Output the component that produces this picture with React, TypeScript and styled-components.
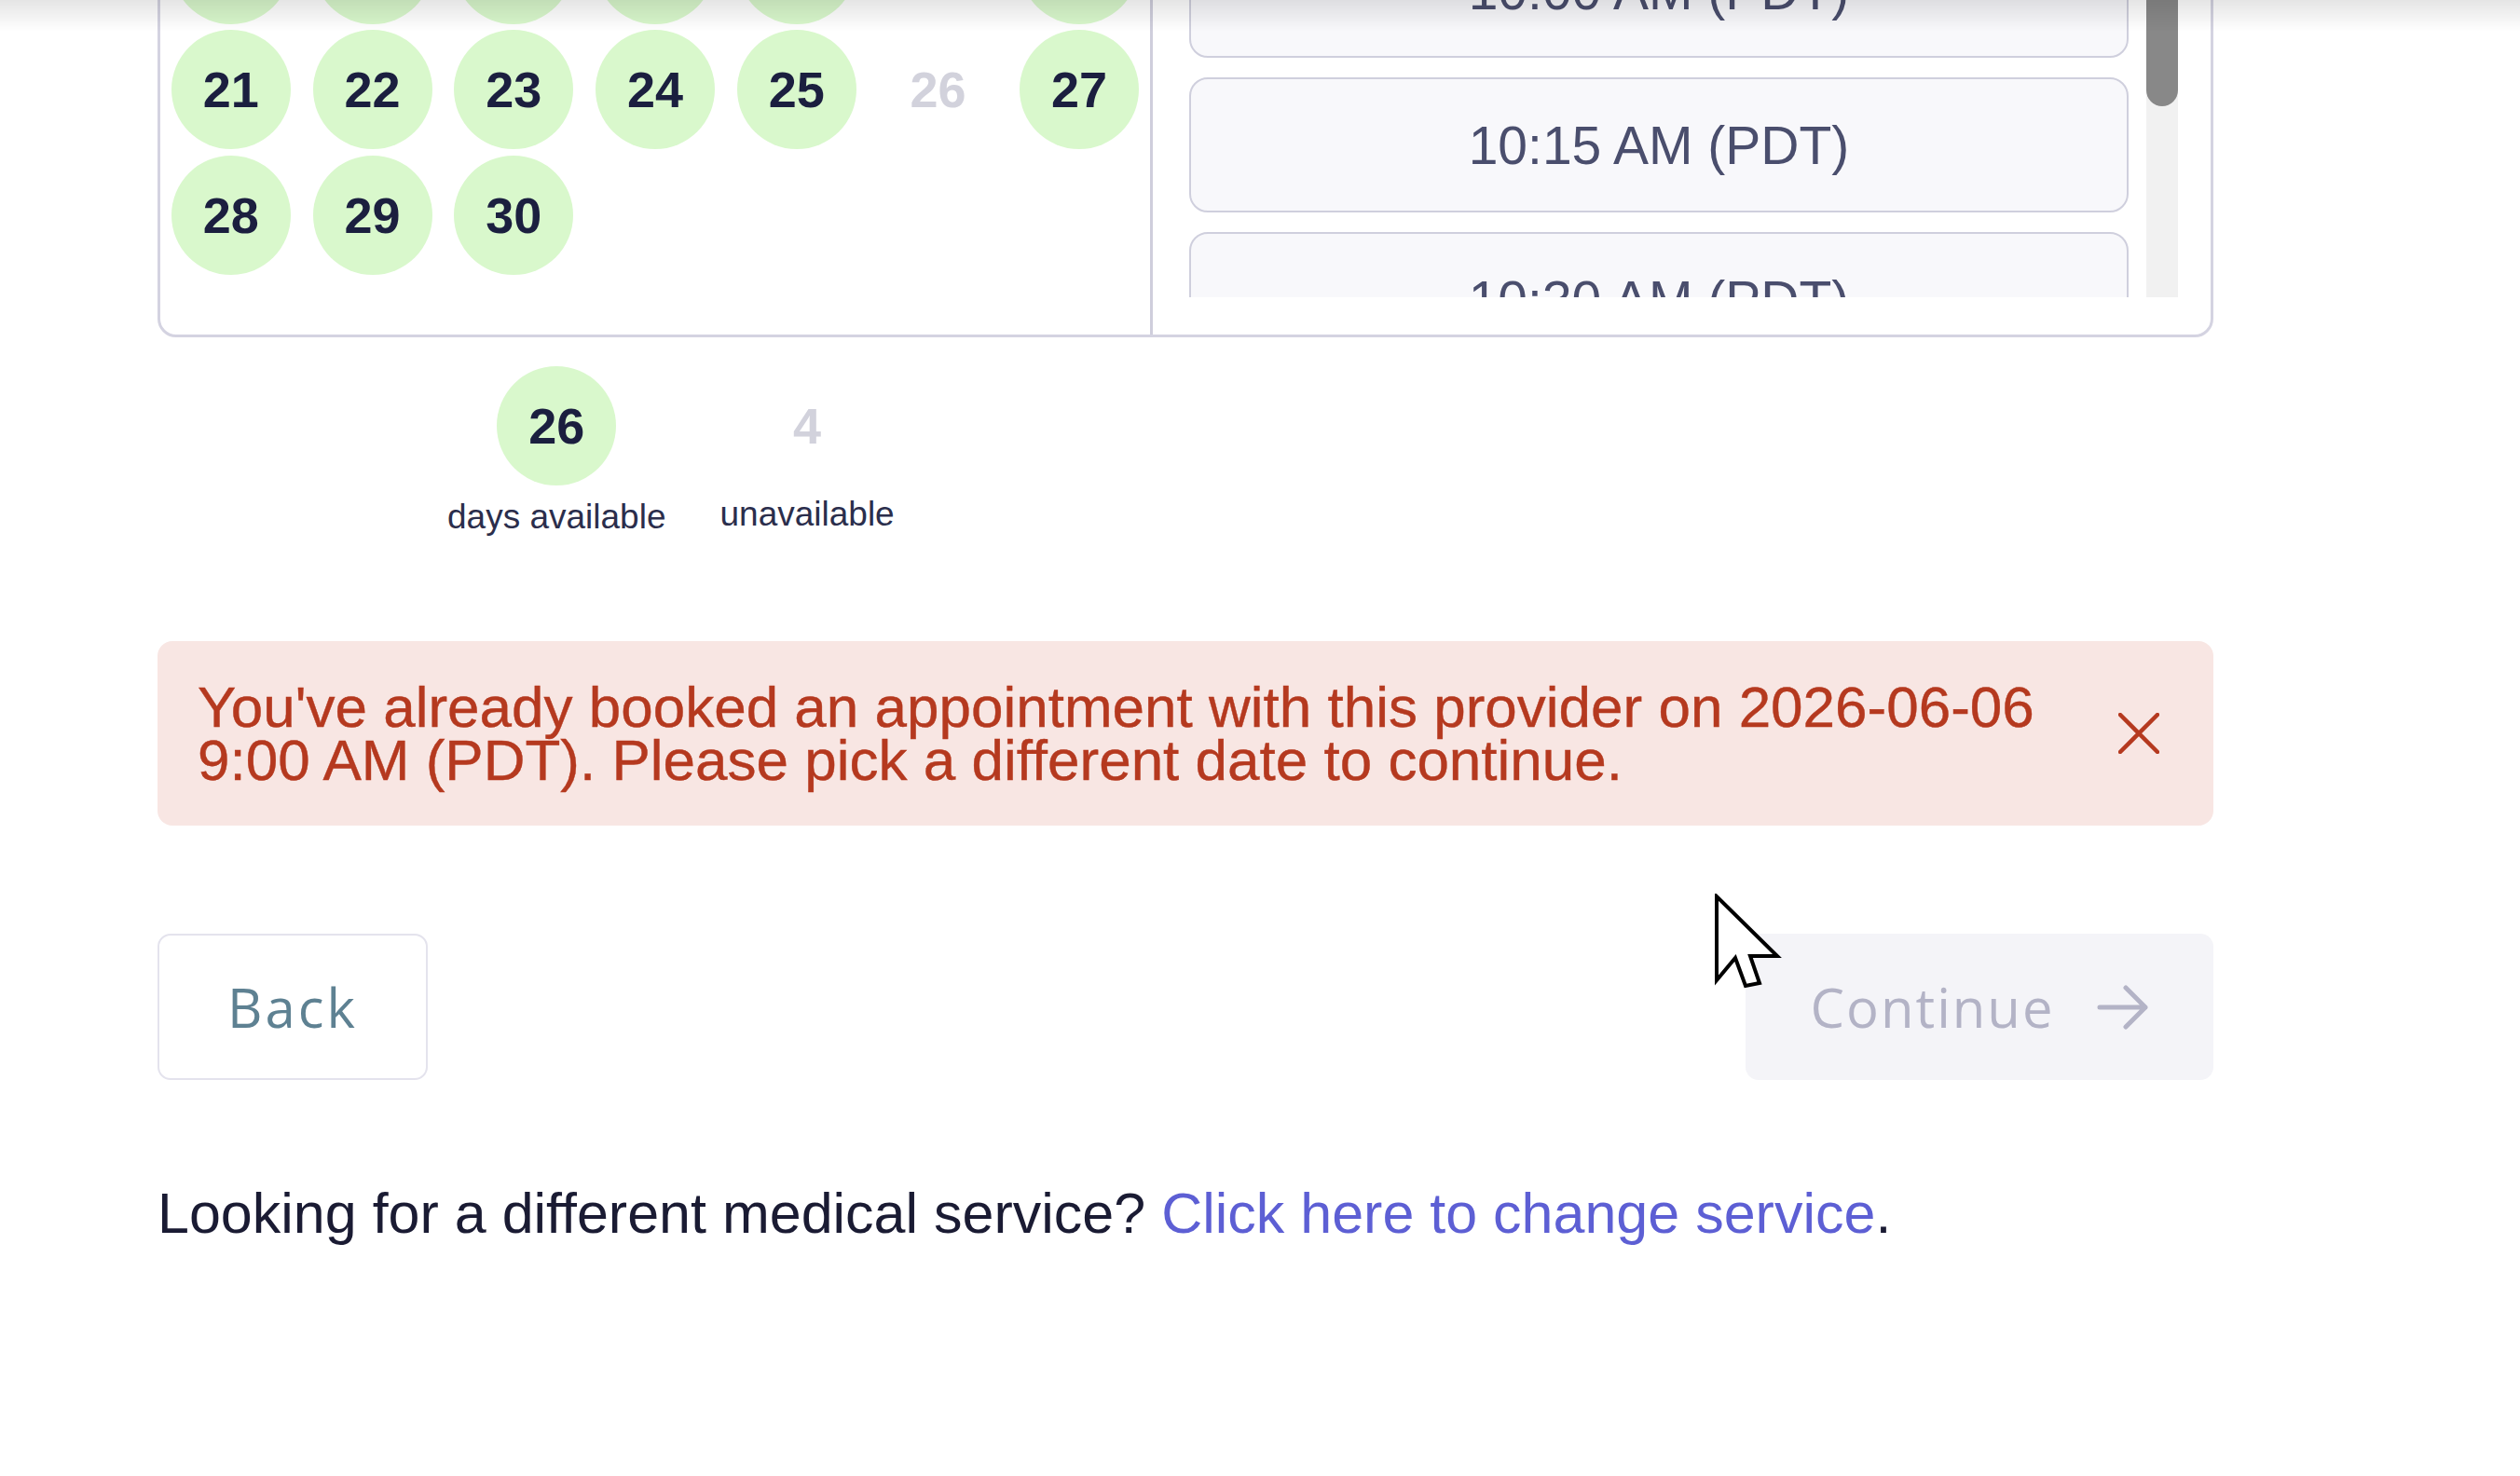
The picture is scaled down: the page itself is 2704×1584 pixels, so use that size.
import React, { useLayoutEffect, useRef } from "react";
import styled, { createGlobalStyle } from "styled-components";

const GlobalStyle = createGlobalStyle`
  html, body {
    margin: 0;
    padding: 0;
    background: #ffffff;
    overflow: hidden;
  }
  body {
    font-family: "Liberation Sans", Arial, sans-serif;
    color: #1a1b33;
  }
`;

const Viewport = styled.div`
  height: 1584px;
  overflow: hidden;
`;

const Page = styled.main`
  width: 2206px;
  margin-left: 169px;
  display: flex;
  flex-direction: column;
`;

/* page is scrolled: the card's upper part lies above the viewport */
const Card = styled.section`
  margin-top: -441px;
  display: grid;
  grid-template-columns: 1065px 1fr;
  border: 3px solid #d4d3e1;
  border-radius: 20px;
  background: #fff;
`;

const CalendarPanel = styled.div`
  border-right: 3px solid #cfcedc;
  padding: 66.5px 0 64.5px;
`;

const DayGrid = styled.div`
  display: grid;
  grid-template-columns: repeat(7, 1fr);
  grid-auto-rows: 128px;
  row-gap: 6.5px;
  justify-items: center;
`;

const Day = styled.div<{ $available: boolean }>`
  width: 128px;
  height: 128px;
  border-radius: 50%;
  display: flex;
  align-items: center;
  justify-content: center;
  background: ${(p) => (p.$available ? "#d9f8cc" : "transparent")};
  color: ${(p) => (p.$available ? "#1b1f3f" : "#d2d2dc")};
  font-size: 54px;
  font-weight: 700;
`;

const TimePanel = styled.div`
  padding: 37px 35px 40px 39px;
  display: flex;
  gap: 19px;
`;

const SlotViewport = styled.div`
  flex: 1;
  height: 720px;
  overflow: hidden;
`;

const SlotList = styled.div`
  display: flex;
  flex-direction: column;
  gap: 21px;
`;

const ScrollTrack = styled.div`
  flex: none;
  width: 34px;
  height: 720px;
  background: #f1f1f1;
  display: flex;
  flex-direction: column;
`;

const ScrollThumb = styled.div<{ $offset: number; $length: number }>`
  margin-top: ${(p) => p.$offset}px;
  height: ${(p) => p.$length}px;
  border-radius: 17px;
  background: #888888;
`;

const Slot = styled.button`
  height: 145px;
  flex: none;
  border: 2px solid #cfcfdd;
  border-radius: 20px;
  background: #f8f8fb;
  color: #4a4e6d;
  font-family: "Liberation Sans", Arial, sans-serif;
  font-size: 57px;
  display: flex;
  align-items: center;
  justify-content: center;
  padding: 0;
`;

const Legend = styled.div`
  display: flex;
  gap: 58px;
  margin: 31px 0 0 311px;
  align-items: flex-start;
`;

const LegendItem = styled.div`
  display: flex;
  flex-direction: column;
  align-items: center;
  gap: 12px;
`;

const LegendBadge = styled.div<{ $available: boolean }>`
  width: 128px;
  height: 128px;
  border-radius: 50%;
  display: flex;
  align-items: center;
  justify-content: center;
  background: ${(p) => (p.$available ? "#d9f8cc" : "transparent")};
  color: ${(p) => (p.$available ? "#1b1f3f" : "#d2d2dc")};
  font-size: 54px;
  font-weight: 700;
`;

const LegendLabel = styled.div<{ $shift?: number }>`
  font-size: 37px;
  line-height: 44px;
  color: #2b2e4c;
  margin-top: ${(p) => p.$shift ?? 0}px;
`;

const Alert = styled.div`
  margin-top: 111px;
  height: 198px;
  box-sizing: border-box;
  background: #f8e6e3;
  border-radius: 16px;
  display: flex;
  align-items: center;
  padding: 0 56px 0 43px;
  gap: 60px;
`;

const AlertText = styled.p`
  flex: 1;
  margin: 0;
  color: #b5391f;
  font-size: 62px;
  line-height: 57px;
  -webkit-text-stroke: 0.4px #b5391f;
`;

const CloseButton = styled.button`
  flex: none;
  width: 48px;
  height: 48px;
  padding: 0;
  border: 0;
  background: transparent;
  display: flex;
  align-items: center;
  justify-content: center;
`;

const Actions = styled.div`
  margin-top: 116px;
  display: flex;
  justify-content: space-between;
  align-items: center;
`;

const BaseButton = styled.button`
  height: 157px;
  box-sizing: border-box;
  border-radius: 14px;
  font-family: "Open Sans", sans-serif;
  font-weight: 500;
  font-size: 58px;
  display: flex;
  align-items: center;
  justify-content: center;
`;

const BackButton = styled(BaseButton)`
  width: 290px;
  background: #ffffff;
  border: 2px solid #e4e3ed;
  color: #5e8192;
  letter-spacing: 3px;
`;

const ContinueButton = styled(BaseButton)`
  width: 502px;
  background: #f4f4f8;
  border: 0;
  color: #b3b3c6;
  letter-spacing: 2px;
  gap: 45px;
`;

const Footer = styled.p`
  margin: 111px 0 0;
  font-size: 61px;
  line-height: 64px;
  color: #1a1b33;
`;

const Link = styled.a`
  color: #5d5fd4;
  text-decoration: none;
`;

const TopShade = styled.div`
  position: fixed;
  top: 0;
  left: 0;
  right: 0;
  height: 34px;
  background: linear-gradient(to bottom, rgba(0, 0, 0, 0.1), rgba(0, 0, 0, 0));
  pointer-events: none;
`;

const Cursor = styled.svg`
  position: fixed;
  left: 1839px;
  top: 959px;
  pointer-events: none;
`;

const weeks: (number | null)[][] = [
  [null, 1, 2, 3, 4, 5, 6],
  [7, 8, 9, 10, 11, 12, 13],
  [14, 15, 16, 17, 18, 19, 20],
  [21, 22, 23, 24, 25, 26, 27],
  [28, 29, 30, null, null, null, null],
];
const unavailable = new Set([5, 12, 19, 26]);

const slots = [
  "9:00 AM (PDT)",
  "9:15 AM (PDT)",
  "9:30 AM (PDT)",
  "9:45 AM (PDT)",
  "10:00 AM (PDT)",
  "10:15 AM (PDT)",
  "10:30 AM (PDT)",
  "10:45 AM (PDT)",
  "11:00 AM (PDT)",
];

const SCROLL_TOP = 346;

export default function App() {
  const scroller = useRef<HTMLDivElement>(null);
  useLayoutEffect(() => {
    if (scroller.current) scroller.current.scrollTop = SCROLL_TOP;
  }, []);

  return (
    <Viewport>
      <GlobalStyle />
      <Page>
        <Card>
          <CalendarPanel>
            <DayGrid>
              {weeks.flat().map((d, i) =>
                d === null ? (
                  <div key={i} />
                ) : (
                  <Day key={i} $available={!unavailable.has(d)}>
                    {d}
                  </Day>
                )
              )}
            </DayGrid>
          </CalendarPanel>
          <TimePanel>
            <SlotViewport ref={scroller}>
              <SlotList>
                {slots.map((s) => (
                  <Slot key={s}>{s}</Slot>
                ))}
              </SlotList>
            </SlotViewport>
            <ScrollTrack>
              <ScrollThumb $offset={167} $length={348} />
            </ScrollTrack>
          </TimePanel>
        </Card>

        <Legend>
          <LegendItem>
            <LegendBadge $available>26</LegendBadge>
            <LegendLabel>days available</LegendLabel>
          </LegendItem>
          <LegendItem>
            <LegendBadge $available={false}>4</LegendBadge>
            <LegendLabel $shift={-3}>unavailable</LegendLabel>
          </LegendItem>
        </Legend>

        <Alert role="alert">
          <AlertText>
            You've already booked an appointment with this provider on 2026-06-06 9:00 AM (PDT). Please pick a
            different date to continue.
          </AlertText>
          <CloseButton aria-label="Dismiss">
            <svg width="44" height="44" viewBox="0 0 44 44">
              <path d="M2 2 L42 42 M42 2 L2 42" stroke="#b5391f" strokeWidth="4.5" strokeLinecap="round" />
            </svg>
          </CloseButton>
        </Alert>

        <Actions>
          <BackButton>Back</BackButton>
          <ContinueButton disabled>
            <span>Continue</span>
            <svg width="56" height="50" viewBox="0 0 56 50">
              <path
                d="M3 25 H52 M31 4 L52 25 L31 46"
                fill="none"
                stroke="#b3b3c6"
                strokeWidth="5"
                strokeLinecap="round"
                strokeLinejoin="round"
              />
            </svg>
          </ContinueButton>
        </Actions>

        <Footer>
          Looking for a different medical service? <Link href="#">Click here to change service</Link>.
        </Footer>
      </Page>
      <TopShade />
      <Cursor width="76" height="104" viewBox="0 0 76 104">
        <polygon
          points="3,3 3,93 23,69 34,99 49,96 39,67 68,67"
          fill="#ffffff"
          stroke="#000000"
          strokeWidth="4"
          strokeLinejoin="miter"
        />
      </Cursor>
    </Viewport>
  );
}
